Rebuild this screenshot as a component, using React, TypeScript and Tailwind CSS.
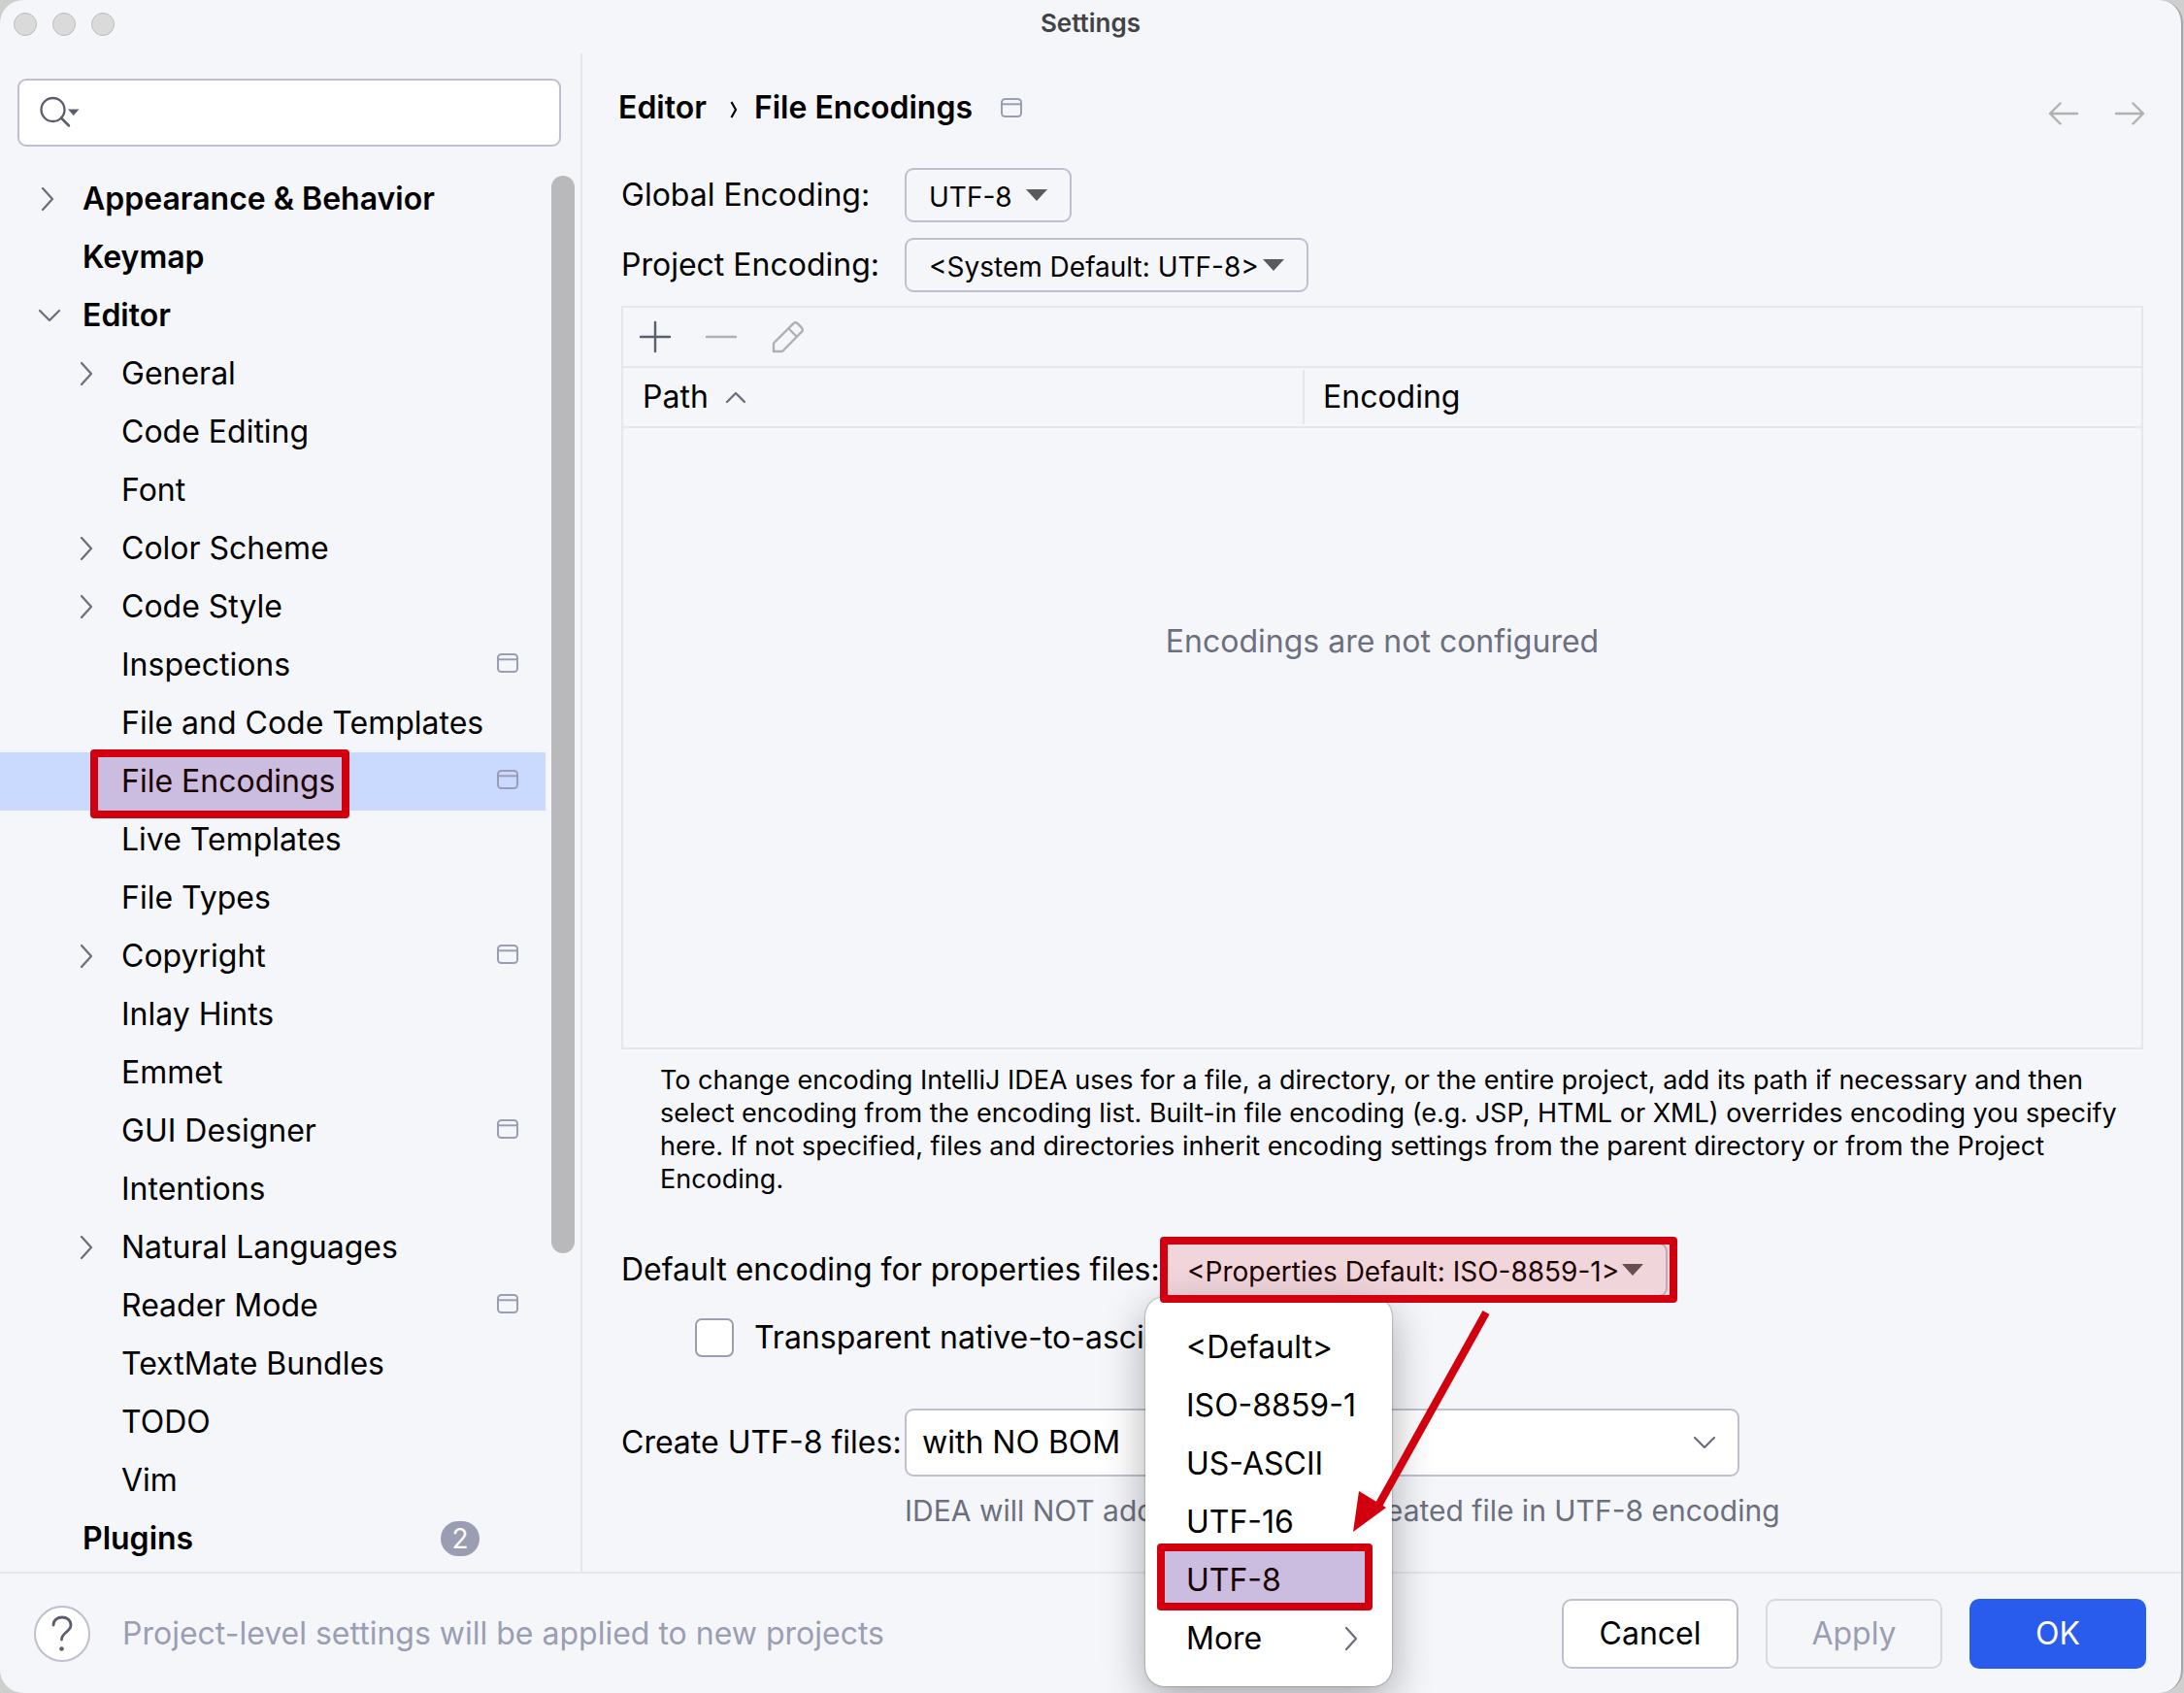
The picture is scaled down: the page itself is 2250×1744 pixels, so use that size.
import React from "react";

type Node = { label: string; level: 0 | 1; arrow?: "right" | "down"; scope?: boolean; badge?: string; selected?: boolean; ls?: string };

const tree: Node[] = [
  { label: "Appearance & Behavior", level: 0, arrow: "right" },
  { label: "Keymap", level: 0 },
  { label: "Editor", level: 0, arrow: "down" },
  { label: "General", level: 1, arrow: "right" },
  { label: "Code Editing", level: 1 },
  { label: "Font", level: 1 },
  { label: "Color Scheme", level: 1, arrow: "right" },
  { label: "Code Style", level: 1, arrow: "right" },
  { label: "Inspections", level: 1, scope: true },
  { label: "File and Code Templates", level: 1 },
  { label: "File Encodings", level: 1, scope: true, selected: true },
  { label: "Live Templates", level: 1 },
  { label: "File Types", level: 1 },
  { label: "Copyright", level: 1, arrow: "right", scope: true },
  { label: "Inlay Hints", level: 1 },
  { label: "Emmet", level: 1 },
  { label: "GUI Designer", level: 1, scope: true },
  { label: "Intentions", level: 1 },
  { label: "Natural Languages", level: 1, arrow: "right" },
  { label: "Reader Mode", level: 1, scope: true },
  { label: "TextMate Bundles", level: 1 },
  { label: "TODO", level: 1 },
  { label: "Vim", level: 1 },
  { label: "Plugins", level: 0, badge: "2" },
];

function Chevron({ dir }: { dir: "right" | "down" | "up" }) {
  const d = { right: "M7 3 L17 14 L7 25", down: "M4 9 L14 19 L24 9", up: "M5 19 L14 10 L23 19" }[dir];
  return (
    <svg width="28" height="28" viewBox="0 0 28 28" fill="none" stroke="#6c707e" strokeWidth="2.3" strokeLinecap="round" strokeLinejoin="round" className="shrink-0">
      <path d={d} />
    </svg>
  );
}

function ScopeIcon() {
  return (
    <svg width="22" height="20" viewBox="0 0 22 20" fill="none" stroke="#9a9eb3" strokeWidth="2" className="shrink-0">
      <rect x="1" y="1" width="20" height="18" rx="3.5" />
      <path d="M1 6.3H21" />
    </svg>
  );
}

function Triangle({ color = "#5a5a5a" }: { color?: string }) {
  return (
    <svg width="22" height="12" viewBox="0 0 22 12" className="shrink-0">
      <path d="M0 0H22L11 12Z" fill={color} />
    </svg>
  );
}

function Combo({ text, className }: { text: string; className: string }) {
  return (
    <div className={`flex h-14 items-center justify-between rounded-[9px] border-2 border-[#bfbfd0] pr-[23px] pl-[23px] ${className}`}>
      <span className="mt-[3px] text-[28px] leading-none whitespace-nowrap">{text}</span>
      <Triangle />
    </div>
  );
}

function TreeRow({ n }: { n: Node }) {
  return (
    <div className={`flex h-[60px] w-[562px] items-center pr-7 ${n.level ? "pl-[77px]" : "pl-[37px]"} ${n.selected ? "bg-[#cad9fe]" : ""}`}>
      <span className="flex w-12 shrink-0">{n.arrow && <Chevron dir={n.arrow} />}</span>
      <span className={`relative whitespace-nowrap ${n.level ? "" : "font-semibold"}`}>
        {n.selected && (
          <span className="absolute -top-[13px] -left-8 z-10 h-[71px] w-[267px] rounded-[4px] border-8 border-[#d2000f] bg-[#d2000f]/13" />
        )}
        {n.label}
      </span>
      {n.scope && <span className="mb-1 ml-auto"><ScopeIcon /></span>}
      {n.badge && (
        <span className="mr-10 ml-auto flex h-9 w-10 items-center justify-center rounded-full bg-[#9a9eb3] text-[28px] text-white">{n.badge}</span>
      )}
    </div>
  );
}

function Sidebar() {
  return (
    <div className="relative flex h-full w-[600px] shrink-0 flex-col border-r-2 border-[#e6e7eb] pt-[26px]">
      <div className="ml-[18px] flex h-[70px] w-[560px] items-center rounded-[9px] border-2 border-[#bfbfd0] bg-white pl-5">
        <svg width="44" height="36" viewBox="0 0 44 36" fill="none" className="shrink-0">
          <circle cx="14.5" cy="15" r="12" stroke="#5a5d6b" strokeWidth="2.3" />
          <path d="M23 23.5L31 31.5" stroke="#5a5d6b" strokeWidth="2.5" strokeLinecap="round" />
          <path d="M30 14.5H41.5L35.7 21Z" fill="#5a5d6b" />
        </svg>
      </div>
      <div className="mt-6 flex flex-col">
        {tree.map((n) => <TreeRow key={n.label} n={n} />)}
      </div>
      <div className="absolute top-[126px] right-[6px] h-[1110px] w-6 rounded-full bg-[#b9b9bb]" />
    </div>
  );
}

function Popup() {
  return (
    <div className="absolute top-[62px] -left-[15px] z-20 flex h-[401px] w-[254px] flex-col rounded-[20px] bg-white pt-[22px] pl-[42px] shadow-[0_0_2px_rgba(0,0,0,0.55),0_14px_44px_rgba(0,0,0,0.32)]">
      {["<Default>", "ISO-8859-1", "US-ASCII", "UTF-16"].map((t) => (
        <div key={t} className="flex h-[60px] items-center whitespace-nowrap">{t}</div>
      ))}
      <div className="-ml-[30px] flex h-[60px] w-[221px] items-center bg-[#cad9fe] pl-[30px] relative">
        UTF-8
        <span className="absolute -top-2 left-0 h-[69px] w-[222px] rounded-[4px] border-8 border-[#d2000f] bg-[#d2000f]/13" />
      </div>
      <div className="flex h-[60px] items-center justify-between pr-[26px]">
        More
        <Chevron dir="right" />
      </div>
    </div>
  );
}

function CalloutArrow() {
  return (
    <svg width="160" height="240" viewBox="0 0 160 240" className="absolute top-[71px] left-[195px] z-30">
      <path d="M141 7L30 206" stroke="#d2000f" strokeWidth="8" />
      <path d="M4 233L10 191L38 208Z" fill="#d2000f" />
    </svg>
  );
}

function Content() {
  return (
    <div className="flex min-w-0 flex-1 flex-col pl-10">
      <div className="-ml-[3px] flex h-[118px] items-start justify-between">
        <div className="mt-[36px] flex h-10 items-center font-semibold">
          <span>Editor</span>
          <svg width="8" height="20" viewBox="0 0 8 20" fill="none" stroke="#000" strokeWidth="2.2" className="mt-1 ml-6 mr-[17px]">
            <path d="M1.5 2L6 10L1.5 18" />
          </svg>
          <span>File Encodings</span>
          <span className="ml-[29px]"><ScopeIcon /></span>
        </div>
        <div className="mt-[50px] mr-[37px] flex gap-[36px]">
          <svg width="32" height="24" viewBox="0 0 32 24" fill="none" stroke="#b0b0b0" strokeWidth="2.4" strokeLinecap="round" strokeLinejoin="round"><path d="M30 12H2M12.500 1.500L2 12L12.500 22.500" /></svg>
          <svg width="32" height="24" viewBox="0 0 32 24" fill="none" stroke="#b0b0b0" strokeWidth="2.4" strokeLinecap="round" strokeLinejoin="round"><path d="M2 12H30M19.500 1.500L30 12L19.500 22.500" /></svg>
        </div>
      </div>
      <div className="flex h-14 items-center">
        <span className="w-[292px]">Global Encoding:</span>
        <Combo text="UTF-8" className="w-[172px]" />
      </div>
      <div className="mt-4 flex h-14 items-center">
        <span className="w-[292px]">Project Encoding:</span>
        <Combo text="<System Default: UTF-8>" className="w-[416px]" />
      </div>
      <div className="mt-[14px] flex h-[766px] w-[1568px] flex-col border-2 border-[#e6e7eb]">
        <div className="flex h-[62px] items-center border-b-2 border-[#e6e7eb] pl-4">
          <svg width="34" height="34" viewBox="0 0 34 34" stroke="#5a5d6b" strokeWidth="2.4" strokeLinecap="round"><path d="M17 2V32M2 17H32" /></svg>
          <svg width="34" height="34" viewBox="0 0 34 34" stroke="#b0b0b0" strokeWidth="2.4" strokeLinecap="round" className="ml-[34px]"><path d="M2 17H32" /></svg>
          <svg width="36" height="34" viewBox="0 0 36 34" fill="none" stroke="#b0b0b0" strokeWidth="2.4" strokeLinejoin="round" className="ml-[34px]">
            <path d="M3 23.500L23.500 3.200Q25.500 1.500 27.500 3.200L32 7.700Q33.700 9.700 32 11.700L12 32H3ZM18.500 8.500L27 17" />
          </svg>
        </div>
        <div className="flex h-[62px] items-center border-b-2 border-[#e6e7eb]">
          <div className="flex h-[56px] w-[702px] items-center gap-[14px] border-r-2 border-[#e6e7eb] pl-5">Path <Chevron dir="up" /></div>
          <div className="pl-[19px]">Encoding</div>
        </div>
        <div className="mt-[200px] text-center text-[#6c707e]">Encodings are not configured</div>
      </div>
      <div className="mt-[15px] ml-10 text-[27px] leading-[34px] whitespace-nowrap">
        <div>To change encoding IntelliJ IDEA uses for a file, a directory, or the entire project, add its path if necessary and then</div>
        <div>select encoding from the encoding list. Built-in file encoding (e.g. JSP, HTML or XML) overrides encoding you specify</div>
        <div>here. If not specified, files and directories inherit encoding settings from the parent directory or from the Project</div>
        <div>Encoding.</div>
      </div>
      <div className="mt-[42px] flex h-[68px] items-center whitespace-nowrap">
        <span className="w-[555px]">Default encoding for properties files:</span>
        <div className="relative h-[68px] w-[533px]">
          <Popup />
          <div className="absolute inset-0 flex items-center pl-[3px]"><Combo text="<Properties Default: ISO-8859-1>" className="w-[520px]" /></div>
          <div className="absolute inset-0 z-20 rounded-[4px] border-8 border-[#d2000f] bg-[#d2000f]/13" />
          <CalloutArrow />
        </div>
      </div>
      <div className="mt-4 ml-[76px] flex h-10 items-center whitespace-nowrap">
        <span className="mr-[21px] h-10 w-10 rounded-[7px] border-2 border-[#9a9eb3] bg-white" />
        Transparent native-to-ascii
      </div>
      <div className="mt-[53px] flex h-[70px] items-center">
        <span className="w-[292px] whitespace-nowrap">Create UTF-8 files:</span>
        <div className="flex h-[70px] w-[860px] items-center justify-between rounded-[9px] border-2 border-[#bfbfd0] bg-white pr-5 pl-4">
          with NO BOM
          <Chevron dir="down" />
        </div>
      </div>
      <div className="mt-[15px] ml-[292px] text-[30px] leading-10 whitespace-nowrap text-[#6c707e]">IDEA will NOT add BOM to every created file in UTF-8 encoding</div>
    </div>
  );
}

export default function App() {
  return (
    <div className="h-[1744px] w-[2250px] overflow-hidden bg-[#cfcfcf] font-[Inter,sans-serif] text-[32px] leading-10 text-black">
      <div className="flex h-full w-[2249px] flex-col rounded-[24px] border-r-2 border-[#a3a5a8] bg-[#f5f6fa]">
        <div className="relative flex h-[55px] shrink-0 items-center justify-center">
          <div className="absolute top-[13px] left-[14px] flex gap-4">
            {[0, 1, 2].map((i) => <span key={i} className="size-6 rounded-full border border-[#bcbcbd] bg-[#dadadb]" />)}
          </div>
          <span className="mb-[7px] text-[26px] font-semibold text-[#424344]">Settings</span>
        </div>
        <div className="flex h-[1564px] shrink-0">
          <Sidebar />
          <Content />
        </div>
        <div className="flex flex-1 items-center border-t-2 border-[#e6e7eb] pr-9 pl-[35px]">
          <span className="flex size-[58px] items-center justify-center rounded-full border-2 border-[#bfbfd0] bg-white">
            <svg width="24" height="38" viewBox="0 0 24 38" fill="none" stroke="#5a5d6b" strokeWidth="2.8" strokeLinecap="round">
              <path d="M3 10C3 5 7 2 12 2S21 5 21 10C21 17 11.500 17.500 11.500 25" />
              <circle cx="11.500" cy="34.500" r="2.300" fill="#5a5d6b" stroke="none" />
            </svg>
          </span>
          <span className="ml-[33px] text-[#9a9eb3]">Project-level settings will be applied to new projects</span>
          <div className="ml-auto flex gap-7">
            <button className="h-[72px] w-[182px] rounded-[10px] border-2 border-[#bfbfd0] bg-white">Cancel</button>
            <button className="h-[72px] w-[182px] rounded-[10px] border-2 border-[#d8d9df] text-[#9a9eb3]">Apply</button>
            <button className="h-[72px] w-[182px] rounded-[10px] bg-[#295bec] text-white">OK</button>
          </div>
        </div>
      </div>
    </div>
  );
}
